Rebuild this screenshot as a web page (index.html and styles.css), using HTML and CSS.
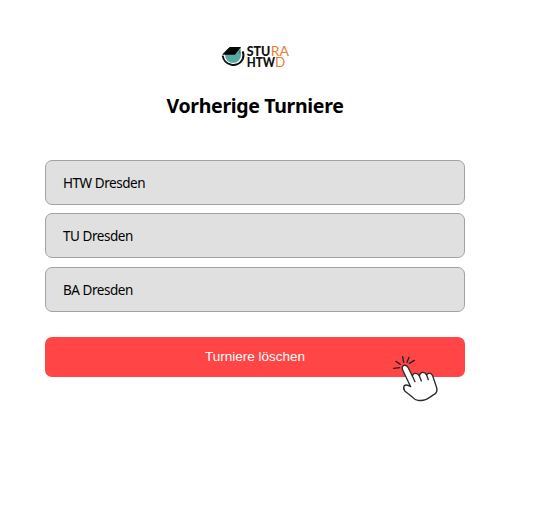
FILE: index.html
```html
<!DOCTYPE html>
<html lang="de">
<head>
<meta charset="utf-8">
<title>Vorherige Turniere</title>
<link rel="stylesheet" href="styles.css">
</head>
<body>
<main class="page">
  <svg class="logo" viewBox="0 0 240 108" role="img" aria-label="STURA HTWD">
    <circle cx="54" cy="51" r="24" fill="#58aaa1"/>
    <path d="M23 53 A32 32 0 0 0 83 64 Q88 51 83 40" fill="none" stroke="#111" stroke-width="6"/>
    <path d="M21 50 L44 27 H78 L60 50 Z" fill="#050505"/>
    <path d="M75 28 V47" stroke="#111" stroke-width="2"/>
    <g class="logo-text">
      <text x="95" y="55" textLength="71" lengthAdjust="spacingAndGlyphs">STU</text>
      <text x="95" y="86" textLength="85" lengthAdjust="spacingAndGlyphs">HTW</text>
    </g>
    <g class="logo-accent">
      <text x="167" y="55" textLength="55" lengthAdjust="spacingAndGlyphs">RA</text>
      <text x="180" y="88" textLength="31" lengthAdjust="spacingAndGlyphs">D</text>
    </g>
  </svg>
  <h1 class="title">Vorherige Turniere</h1>
  <ul class="list">
    <li class="item"><span class="name">HTW Dresden</span></li>
    <li class="item"><span class="name">TU Dresden</span></li>
    <li class="item"><span class="name">BA Dresden</span></li>
  </ul>
  <div class="action">
    <button class="delete" type="button">Turniere löschen</button>
    <svg class="pointer" viewBox="0 0 180 168" aria-hidden="true">
      <path d="M77 110 L53 60 Q49 49 57 46 Q65 44 70 54 L82 78 Q86 66 98 72 L103 77 Q108 63 120 69 L125 75 Q133 63 143 77 L155 113 Q158 124 151 131 Q143 136 134 142 Q120 154 99 151 Q90 150 83 142 L60 124 Q53 115 58 107 Q65 102 77 110" fill="#fff" stroke="#2b2b2b" stroke-width="4" stroke-linejoin="round" stroke-linecap="round"/>
      <path d="M82 78 L90 95 M103 77 L109 93 M125 75 L130 89" fill="none" stroke="#2b2b2b" stroke-width="4" stroke-linecap="round"/>
      <path d="M26 55 L44 53 M33 34 L46 43 M53 20 L56 37 M72 22 L66 37 M88 31 L73 40" fill="none" stroke="#222" stroke-width="4" stroke-linecap="round"/>
    </svg>
  </div>
</main>
</body>
</html>
```
FILE: styles.css
```css
* { box-sizing: border-box; }
body { margin: 0; background: #fff; color: #000; }
.page {
  display: flex;
  flex-direction: column;
  width: 420px;
  min-height: 100vh;
  margin-left: 45px;
  padding-top: 38px;
}
.logo { align-self: center; width: 80px; height: 36px; }
.logo-text, .logo-accent { font-family: Lato, sans-serif; font-size: 38px; }
.logo-text { font-weight: 900; fill: #111; }
.logo-accent { font-weight: 400; fill: #ef7d32; }
.title {
  margin: 17px 0 0;
  font: 700 19.5px/30px "Noto Sans", sans-serif;
  letter-spacing: -0.33px;
  text-align: center;
  white-space: nowrap;
}
.list {
  display: flex;
  flex-direction: column;
  gap: 8.3px;
  margin: 39px 0 0;
  padding: 0;
  list-style: none;
}
.item {
  display: flex;
  align-items: center;
  height: 45px;
  padding: 1px 17px 0;
  border: 1px solid #a2a2a2;
  border-radius: 7px;
  background: #e0e0e0;
}
.name { font: 13.5px/20px "Noto Sans", sans-serif; letter-spacing: -0.45px; }
.action { position: relative; margin-top: 25px; }
.delete {
  display: block;
  width: 100%;
  height: 40.5px;
  padding: 0;
  border: 0;
  border-radius: 7px;
  background: #ff4545;
  color: #fff;
  font: 13.5px/20px "Liberation Sans", Arial, sans-serif;
}
.pointer { position: absolute; left: 340px; top: 13.5px; width: 60px; height: 56px; }
```
